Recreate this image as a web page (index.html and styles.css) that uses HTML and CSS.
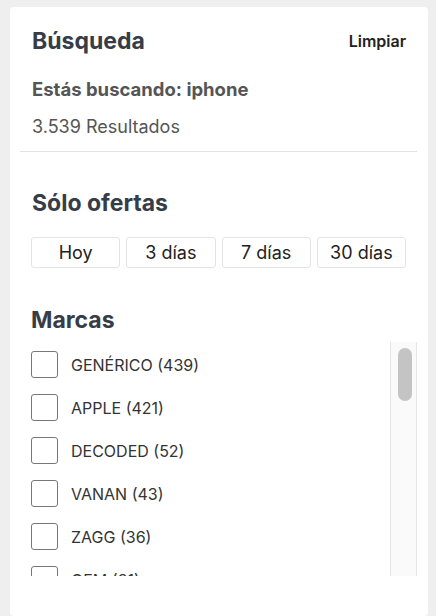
FILE: index.html
```html
<!DOCTYPE html>
<html lang="es">
<head>
    <meta charset="UTF-8">
    <meta name="viewport" content="width=device-width, initial-scale=1.0">
    <title>Filtros</title>
    <link rel="stylesheet" href="styles.css">
</head>
<body>
    <div class="panel">
        <div class="search">
            <div class="search-head">
                <h2 class="title">Búsqueda</h2>
                <a class="clear" href="#">Limpiar</a>
            </div>
            <p class="query">Estás buscando: iphone</p>
            <p class="count">3.539 Resultados</p>
        </div>

        <div class="offers">
            <h2 class="title">Sólo ofertas</h2>
            <div class="offer-buttons">
                <button class="offer">Hoy</button>
                <button class="offer">3 días</button>
                <button class="offer">7 días</button>
                <button class="offer">30 días</button>
            </div>
        </div>

        <div class="brands">
            <h2 class="title">Marcas</h2>
            <div class="brand-box">
                <ul class="brand-list">
                    <li><label><input type="checkbox"> GENÉRICO (439)</label></li>
                    <li><label><input type="checkbox"> APPLE (421)</label></li>
                    <li><label><input type="checkbox"> DECODED (52)</label></li>
                    <li><label><input type="checkbox"> VANAN (43)</label></li>
                    <li><label><input type="checkbox"> ZAGG (36)</label></li>
                    <li><label><input type="checkbox"> OEM (31)</label></li>
                    <li><label><input type="checkbox"> SPIGEN (29)</label></li>
                    <li><label><input type="checkbox"> OTTERBOX (27)</label></li>
                </ul>
                <!-- barra de desplazamiento de la lista -->
                <div class="scrollbar">
                    <div class="thumb"></div>
                </div>
            </div>
        </div>
    </div>
</body>
</html>
```

FILE: styles.css
```css
body {
    margin: 0;
    background-color: #efefef;
    font-family: 'Inter', 'Noto Sans', sans-serif;
    color: #555;
}

.panel {
    width: 418px;
    margin: 7px 0 0 10px;
    min-height: 609px;
    background-color: #fff;
    border-radius: 4px;
}

.title {
    margin: 0;
    font-size: 23px;
    line-height: 28px;
    font-weight: 700;
    color: #363d47;
}

/* bloque de búsqueda */
.search {
    margin: 0 11px 0 10px;
    padding: 20px 11px 12px 12px;
    border-bottom: 1px solid #e3e3e3;
}

.search-head {
    display: flex;
    justify-content: space-between;
    align-items: flex-start;
}

.clear {
    margin-top: 4px;
    font-size: 16px;
    line-height: 20px;
    font-weight: 600;
    color: #222;
    text-decoration: none;
}

.query {
    margin: 22px 0 0;
    font-size: 18.5px;
    line-height: 24px;
    font-weight: 700;
}

.count {
    margin: 14px 0 0;
    font-size: 18px;
    line-height: 24px;
}

/* ofertas */
.offers {
    padding: 37px 22px 0;
}

.offer-buttons {
    display: flex;
    gap: 6px;
    margin: 20px 0 0 -1px;
}

.offer {
    flex: 1;
    height: 31px;
    padding: 0;
    background-color: #fff;
    border: 1px solid #e4e4e4;
    border-radius: 3px;
    font-family: inherit;
    font-size: 18px;
    color: #222;
}

/* marcas */
.brands {
    padding: 38px 11px 0 21px;
}

.brand-box {
    display: flex;
    margin-top: 8px;
    height: 234px;
}

.brand-list {
    flex: 1;
    list-style: none;
    margin: 0;
    padding: 9px 0 0;
    overflow: hidden;
}

.brand-list li {
    height: 43px;
}

.brand-list label {
    display: flex;
    align-items: center;
    gap: 13px;
    height: 27px;
    font-size: 16px;
    color: #333;
}

.brand-list input {
    appearance: none;
    width: 27px;
    height: 27px;
    margin: 0;
    border: 1.5px solid #777;
    border-radius: 3px;
    background-color: #fff;
}

.scrollbar {
    width: 27px;
    padding: 6px 4px 0 7px;
    box-sizing: border-box;
    background-color: #fafafa;
    border-left: 1px solid #e6e6e6;
    border-right: 1px solid #e6e6e6;
}

.thumb {
    height: 53px;
    background-color: #c4c4c4;
    border-radius: 8px;
}
```
